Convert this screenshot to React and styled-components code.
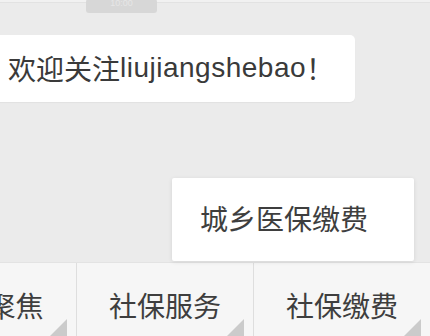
import React from 'react';
import styled, {createGlobalStyle} from 'styled-components';

const GlobalStyle = createGlobalStyle`
  html, body {
    margin: 0;
    padding: 0;
    width: 430px;
    height: 336px;
    overflow: hidden;
    background: #ebebeb;
  }
  * {
    box-sizing: border-box;
  }
`;

const Screen = styled.div`
  width: 430px;
  height: 336px;
  display: flex;
  flex-direction: column;
  background: #ebebeb;
  font-family: "Liberation Sans", "Noto Sans CJK SC", sans-serif;
  overflow: hidden;
  position: relative;
`;

const TopStrip = styled.div`
  height: 3px;
  background: #f1f1f1;
  border-bottom: 1px solid #e2e2e2;
  flex-shrink: 0;
`;

const ChatArea = styled.div`
  flex: 1;
  display: flex;
  flex-direction: column;
  align-items: flex-start;
`;

const TimePill = styled.div`
  margin-left: 86px;
  margin-top: -4px;
  width: 71px;
  height: 14px;
  border-radius: 3px;
  background: #d7d7d7;
  color: #e6e6e6;
  font-size: 9px;
  line-height: 9px;
  text-align: center;
`;

const Bubble = styled.div`
  margin-top: 22px;
  margin-left: -8px;
  width: 363px;
  height: 67px;
  padding-left: 16px;
  padding-bottom: 2px;
  background: #fff;
  border-radius: 5px;
  box-shadow: 0 1px 1px rgba(0, 0, 0, 0.04);
  display: flex;
  align-items: center;
  font-size: 28px;
  color: #3a3a3a;
  white-space: nowrap;
`;

const Latin = styled.span`
  letter-spacing: 0.5px;
`;

const PopMenu = styled.div`
  position: absolute;
  left: 172px;
  top: 178px;
  width: 242px;
  height: 83px;
  padding-left: 28px;
  padding-bottom: 4px;
  background: #fff;
  border-radius: 2px;
  box-shadow: 0 1px 4px rgba(0, 0, 0, 0.1);
  display: flex;
  align-items: center;
  font-size: 28px;
  color: #3e3e3e;
  z-index: 2;
`;

const TabBar = styled.div`
  height: 74px;
  flex-shrink: 0;
  display: flex;
  margin-left: -101px;
  background: #f6f6f6;
  border-top: 1px solid #e3e3e3;
`;

const Tab = styled.div`
  position: relative;
  width: 177px;
  flex-shrink: 0;
  display: flex;
  align-items: center;
  justify-content: center;
  padding-top: 10px;
  font-size: 28px;
  color: #3e3e3e;
  border-left: ${p => (p.$first ? 'none' : '1px solid #dedede')};
`;

const Corner = styled.span`
  position: absolute;
  right: 9px;
  bottom: 0;
  width: 0;
  height: 0;
  border-left: 17px solid transparent;
  border-bottom: 17px solid #cbcbcb;
`;

const tabs = ['新闻聚焦', '社保服务', '社保缴费'];

export default function App() {
    return (
        <>
            <GlobalStyle/>
            <Screen>
                <TopStrip/>
                <ChatArea>
                    <TimePill>10:00</TimePill>
                    <Bubble>欢迎关注<Latin>liujiangshebao</Latin>！</Bubble>
                </ChatArea>
                <PopMenu>城乡医保缴费</PopMenu>
                <TabBar>
                    {tabs.map((t, i) => (
                        <Tab key={t} $first={i === 0}>
                            {t}
                            <Corner/>
                        </Tab>
                    ))}
                </TabBar>
            </Screen>
        </>
    );
}
